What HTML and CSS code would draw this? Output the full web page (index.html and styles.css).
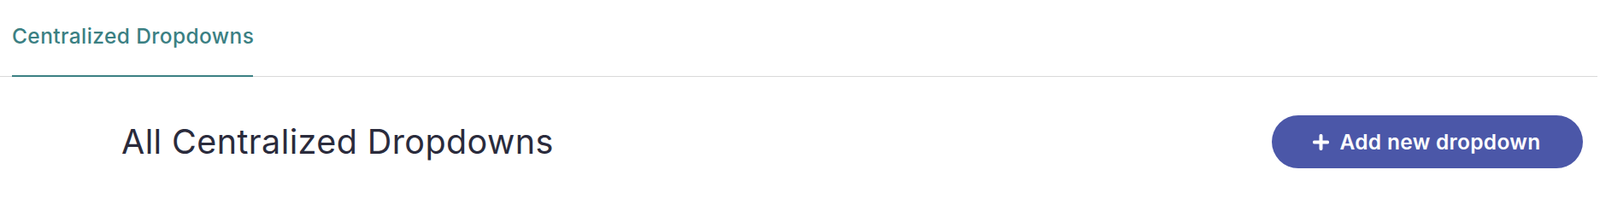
FILE: index.html
```html
<!DOCTYPE html>
<html lang="en">
<head>
<meta charset="utf-8">
<title>Centralized Dropdowns</title>
<link rel="stylesheet" href="styles.css">
</head>
<body>
<nav class="tabs">
  <div class="tab tab-active">Centralized Dropdowns</div>
</nav>
<main class="header-row">
  <h1 class="page-title">All Centralized Dropdowns</h1>
  <button class="btn-add" type="button">
    <svg class="btn-icon" viewBox="0 0 20 20" aria-hidden="true">
      <path d="M10 2v16M2 10h16" stroke="#fff" stroke-width="4.2" stroke-linecap="round" fill="none"/>
    </svg>
    <span>Add new dropdown</span>
  </button>
</main>
</body>
</html>
```

FILE: styles.css
```css
html, body {
  margin: 0;
  padding: 0;
  background: #ffffff;
}
body {
  font-family: Inter, "Noto Sans", "Liberation Sans", sans-serif;
  width: 1872px;
  height: 222px;
  overflow: hidden;
}
.tabs {
  display: flex;
  height: 89px;
  border-bottom: 1px solid #d9d9d9;
  margin-right: 3px;
}
.tab {
  margin-left: 14px;
  padding-top: 27px;
  box-sizing: border-box;
  height: 90px;
  width: 282px;
  font-size: 24.5px;
  font-weight: 500;
  color: #3b8083;
  letter-spacing: 0.4px;
  white-space: nowrap;
}
.tab-active {
  border-bottom: 2px solid #3b8083;
}
.header-row {
  display: flex;
  align-items: center;
  justify-content: space-between;
  padding: 45px 20px 0 142px;
}
.page-title {
  margin: 0;
  font-size: 39.5px;
  font-weight: 400;
  color: #2a2b3c;
  letter-spacing: 0.4px;
  white-space: nowrap;
}
.btn-add {
  display: flex;
  align-items: center;
  justify-content: center;
  gap: 13px;
  width: 364px;
  height: 62px;
  border: none;
  border-radius: 31px;
  background: #4b57a8;
  color: #ffffff;
  font-family: inherit;
  font-size: 24.5px;
  font-weight: 600;
  letter-spacing: 0.3px;
  padding: 0 2px 0 0;
  cursor: pointer;
  white-space: nowrap;
}
.btn-icon {
  width: 19px;
  height: 19px;
  flex: none;
}
```
